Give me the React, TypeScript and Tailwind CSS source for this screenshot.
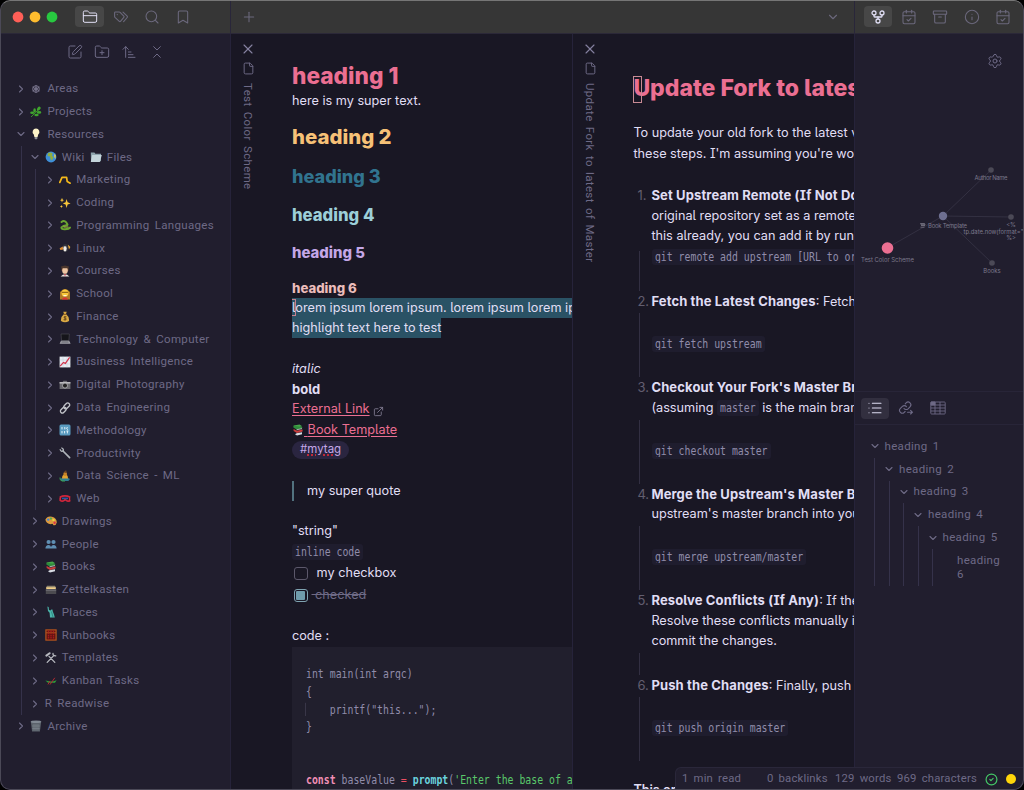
import React from "react";
import {
  Archive, Bookmark, CalendarCheck, ChevronDown, ChevronRight, ChevronsDownUp, CircleCheck, ExternalLink,
  File, FolderClosed, FolderPlus, GitFork, Info, List, Plus, Search, Settings, SquarePen, X, ArrowUpNarrowWide,
} from "lucide-react";

const glyphs: Record<string, React.ReactNode> = {
  areas: <g fill="none" stroke="#77738b" strokeWidth="1"><circle cx="6" cy="6" r="1.3" /><circle cx="6" cy="6" r="3.3" /><path d="M6 2v8M2.5 4l7 4M2.5 8l7-4" /></g>,
  herb: <g fill="#3fa52d"><path d="M1 11Q5 7 10 2" stroke="#3c8f2c" fill="none" /><ellipse cx="8.8" cy="2.6" rx="2.2" ry="1.5" transform="rotate(-50 8.8 2.6)" /><ellipse cx="4.6" cy="4.4" rx="1.3" ry="2.2" /><ellipse cx="9" cy="6.4" rx="2.3" ry="1.3" /><ellipse cx="2.2" cy="6.8" rx="2" ry="1.3" /><ellipse cx="6.5" cy="9" rx="2.2" ry="1.2" /></g>,
  bulb: <g><path d="M6 .6a3.4 3.4 0 0 1 2.2 6L7.6 9H4.4l-.6-2.4A3.4 3.4 0 0 1 6 .6" fill="#fdf3c8" /><path d="M4.6 9h2.8v1.8L6 11.6l-1.4-.8z" fill="#8e8e93" /></g>,
  globe: <g><circle cx="6" cy="6" r="5.4" fill="#3f8fd8" /><path d="M3 2Q6 .8 7.6 2.6L7 5 8.6 6 7 9.6 5.4 8 5 5.6 2.6 5z" fill="#8fae3f" /><path d="M9 3l2 1-.4 4L9 6z" fill="#c2c068" /></g>,
  folder: <g><path d="M.8 1.600h3.600l1 1.200h5.600v7.400H1z" fill="#8ea4ad" /><path d="M2.200 4h9.600L9.800 11H.8z" fill="#c3d4da" /></g>,
  chart: <path d="M.8 8.400Q1.600 6.600 3 3.400L7.600 3.400 8.200 7.600 11.200 9.200" fill="none" stroke="#f5b91b" strokeWidth="1.700" strokeLinejoin="round" strokeLinecap="round" />,
  sparkle: <g fill="#f8c63a"><path d="M7.6 2 8.6 5.2 11.6 6.4 8.6 7.6 7.6 11 6.6 7.6 3.8 6.4 6.6 5.2z" /><path d="M3 .8 3.6 2.6 5 3.2 3.6 3.8 3 5.4 2.4 3.8 1 3.2 2.4 2.6zM2.4 7.8 2.8 9l1.2.5-1.2.4-.4 1.3L2 9.900l-1.2-.4L2 9z" /></g>,
  snake: <g fill="none" stroke="#6aa531" strokeWidth="1.900" strokeLinecap="round"><path d="M2.500 3Q5 .8 7 3.200T8.400 6Q4 6.600 2.400 8.400 2 10.400 6 10.200T11 8.600" /><path d="M5 8h4" stroke="#b8c84a" strokeWidth="1" /></g>,
  bird: <g><ellipse cx="6.400" cy="6" rx="3" ry="4" fill="#30303a" /><ellipse cx="6" cy="6.600" rx="1.700" ry="2.800" fill="#f0ece6" /><path d="M3.800 4.600.6 6.200 1.400 8l3-.6z" fill="#d98b35" /><path d="M8.800 2.600 11.400 5 10 7.600z" fill="#e6a63a" /><circle cx="6" cy="4" r=".6" fill="#222" /></g>,
  student: <g><path d="M2.500 2h7v4h-7z" fill="#5a3a28" /><ellipse cx="6" cy="5.400" rx="2.800" ry="3.400" fill="#efc6a3" /><path d="M2 1.500 6 .4l4 1.100-1 1.700H3z" fill="#4b372e" /><path d="M1.600 11.600Q6 6.800 10.400 11.600z" fill="#e8e3df" /><path d="M5.200 9h1.600L6 11.600z" fill="#c63540" /></g>,
  school: <g><path d="M1 11.400V4Q6-2 11 4v7.400z" fill="#b07a28" /><circle cx="6" cy="5" r="3.500" fill="#fac93c" /><path d="M3 4.300h6" stroke="#7b5312" /><path d="M2.600 11.600Q6 7 9.400 11.600z" fill="#d33" /><path d="M4.400 7.200h3.200v1H4.400z" fill="#fff" /></g>,
  money: <g><path d="M4.300.7h3.400L7 3Q10.600 6 10 10 6 12.400 2 10 1.400 6 5 3z" fill="#d9a944" /><path d="M4.500 3.300h3" stroke="#7b4e1d" /><path d="M7.500 5.800H5.200q-.8 1 .8 1.300 2 .5 1 1.600H4.500M6 5v4.600" fill="none" stroke="#614018" strokeWidth=".8" /></g>,
  laptop: <g><path d="M2 1h8.400l-.6 6.600H2.600z" fill="#15151a" stroke="#4d4d54" strokeWidth=".6" /><path d="M2 7.800h8.200l1.400 3H.6z" fill="#a5a5ac" /><path d="M2.400 9h7.200" stroke="#5d5d64" /></g>,
  growth: <g><path d="M.6.6h10.800v10.800H.6z" fill="#e9edf3" /><path d="M4 .6v10.800M8 .6v10.800M.6 4h10.800M.6 8h10.800" stroke="#b9c4d2" strokeWidth=".4" /><path d="M1.200 10.200 4.400 6.400 6.400 7.400 10.600 1.400" fill="none" stroke="#d2344c" strokeWidth="1.200" /></g>,
  camera: <g><path d="M.6 3h3l.8-1.300h3.200L8.400 3h3v7H.6z" fill="#6b6b70" /><path d="M.6 3h10.800v1.600H.6z" fill="#b9b9bd" /><circle cx="6" cy="6.600" r="2.500" fill="#222" stroke="#c8c8cc" strokeWidth=".7" /></g>,
  link: <g fill="none" stroke="#c2c4c9" strokeWidth="1.300"><rect x="5.800" y=".6" width="3.800" height="6.600" rx="1.900" transform="rotate(45 7.700 3.900)" /><rect x="2.400" y="4.800" width="3.800" height="6.600" rx="1.900" transform="rotate(45 4.300 8.100)" /></g>,
  method: <g><rect x=".5" y=".5" width="11" height="11" rx="1.500" fill="#5a9bc0" /><path d="M3 3v2.400M3 7v2.400M5.800 3v2.400M5.600 7v2.400M8.600 3 7.400 4.400 9 5.600M7.400 7h2M8.400 7v2.400" stroke="#e1f1f8" strokeWidth="1" fill="none" /></g>,
  wrench: <g fill="none" stroke="#aeb3b9" strokeLinecap="round"><path d="M4 4 10.600 10.600" strokeWidth="1.700" /><path d="M1.200 2.600Q2 5 4.200 4 5 2 2.800 1" strokeWidth="1.300" /></g>,
  genie: <g><path d="M2.400 11Q-.4 8.600 3.400 8H9l2 1-1.600 2z" fill="#2f7f93" /><path d="M3 8.600Q3 4.600 6 4.600t3 4z" fill="#e2a331" /><circle cx="6.200" cy="4" r="1.900" fill="#c98427" /><path d="M5.200 2.600Q5.400-.2 7.600.8L7.400 3z" fill="#6b4424" /><path d="M1 7.500q-.6 2.500 2 3.500h3" stroke="#3da652" fill="none" /></g>,
  web: <g fill="none"><path d="M.8 4.200Q6 1.500 11.200 4.200M1.200 4.400v3q2 1.400 4 0 1-1.400 2 0 2 1.400 4 0" stroke="#d0253b" strokeWidth="1.700" /><path d="M3 5.400h6" stroke="#2c56a3" strokeWidth="1.600" /><path d="M10.600 4v4.500" stroke="#d0253b" strokeWidth="1.300" /></g>,
  palette: <g><path d="M.4 4.600Q2.400.6 7 1.800t4.800 5.600Q10.800 11 8.400 10.200 7.600 8.200 6 9.200.8 8.800.4 4.600" fill="#dc9a3f" /><circle cx="3.200" cy="4.600" r="1.200" fill="#3c83d8" /><circle cx="5.900" cy="3.600" r="1.100" fill="#48b053" /><circle cx="8.500" cy="4.900" r="1.200" fill="#e6d943" /><circle cx="9.600" cy="7.700" r="1.200" fill="#d9364a" /></g>,
  people: <g fill="#5f8fb3"><circle cx="3.600" cy="4" r="2.100" /><circle cx="8.500" cy="4" r="2.100" /><path d="M.4 10.600Q.6 7 3.600 7q2 0 2.400 2Q6.500 7 8.500 7q3 0 3.100 3.600z" /></g>,
  books: <g><path d="M1.400 1.600 7.600.4l2.600 1.800L4.600 4z" fill="#45a64a" /><path d="M1.400 1.800v1.600L4.600 5.600l5.600-1.400V3z" fill="#2f8c3c" /><path d="M1.600 5 5 6.800l5.600-1.200v2L5 9 1.600 7z" fill="#c93c3c" /><path d="M4.600 9.200 10 8.200v2l-5 1.400-2-1.400z" fill="#d8dce3" /><path d="M4.600 5.800 10 4.600" stroke="#eee" strokeWidth=".7" /></g>,
  box: <g><path d="M1 3.600 2 1.800h8l1 1.800z" fill="#8d836d" /><path d="M1.200 3.200h9.600v2H1.200z" fill="#f0cf8b" /><path d="M.8 5h10.400v5H.8z" fill="#4c4b50" /><path d="M.8 6.200h10.400" stroke="#87858b" strokeWidth=".7" /></g>,
  liberty: <g fill="#4bb5ab"><path d="M2.400.6 3.600 1 4 4l1.600.4.8-1 1 .2.4 2L9 8.400l.8 3.200H5L4.600 6.800 3 5z" /><path d="M6.400 5.500 8 11" stroke="#2a8079" strokeWidth=".8" /></g>,
  abacus: <g><rect x=".9" y=".9" width="10.200" height="10.200" fill="#5f1512" stroke="#b4541e" strokeWidth="1.200" /><path d="M1 3.800h10" stroke="#b4541e" /><path d="M3.500 1.500v9M6 1.500v9M8.500 1.500v9" stroke="#a51c1c" strokeWidth="1.400" strokeDasharray="1.500 .7" /></g>,
  tools: <g fill="none" stroke="#b8bac0" strokeWidth="1.300" strokeLinecap="round"><path d="M2.200 10.400 9 3.400M4 4.400 9.800 10.400" /><path d="M1.400 3.600 4.600 1.200" strokeWidth="2" /><path d="M8 1.400Q7.600 4 10.800 3.800" /></g>,
  sled: <g><path d="M.4 5.600Q6 7.400 11.600 5.200L10 7.800H3z" fill="#2e9e3a" /><path d="M5 9.600 9.800 2.800M3 9.400 5 6" stroke="#b4292e" strokeWidth="1" /></g>,
  trash: <g><path d="M.8 1.800h10.400l-1.300 9.800H2.100z" fill="#5c636c" /><ellipse cx="6" cy="1.800" rx="5.300" ry="1.300" fill="#818993" /><path d="M4 4v6.500M6 4v6.500M8 4v6.500M2 6h8M2.200 8.500h7.500" stroke="#858d96" strokeWidth=".5" /></g>,
};

function Glyph({ name }: { name: string }) {
  return <svg viewBox="0 0 12 12" className="inline-block size-3 shrink-0">{glyphs[name]}</svg>;
}

type Node = { label: string; icon?: string; kids?: Node[] };

const tree: Node[] = [
  { label: "Areas", icon: "areas" },
  { label: "Projects", icon: "herb" },
  {
    label: "Resources", icon: "bulb", kids: [
      {
        label: "Wiki|Files", icon: "globe", kids: [
          { label: "Marketing", icon: "chart" },
          { label: "Coding", icon: "sparkle" },
          { label: "Programming Languages", icon: "snake" },
          { label: "Linux", icon: "bird" },
          { label: "Courses", icon: "student" },
          { label: "School", icon: "school" },
          { label: "Finance", icon: "money" },
          { label: "Technology & Computer", icon: "laptop" },
          { label: "Business Intelligence", icon: "growth" },
          { label: "Digital Photography", icon: "camera" },
          { label: "Data Engineering", icon: "link" },
          { label: "Methodology", icon: "method" },
          { label: "Productivity", icon: "wrench" },
          { label: "Data Science - ML", icon: "genie" },
          { label: "Web", icon: "web" },
        ],
      },
      { label: "Drawings", icon: "palette" },
      { label: "People", icon: "people" },
      { label: "Books", icon: "books" },
      { label: "Zettelkasten", icon: "box" },
      { label: "Places", icon: "liberty" },
      { label: "Runbooks", icon: "abacus" },
      { label: "Templates", icon: "tools" },
      { label: "Kanban Tasks", icon: "sled" },
      { label: "R Readwise" },
    ],
  },
  { label: "Archive", icon: "trash" },
];

function TreeRow({ node }: { node: Node }) {
  const parts = node.label.split("|");
  return (
    <li>
      <div className="flex h-[22.77px] items-center pl-[7.4px]">
        {node.kids ? <ChevronDown className="size-3 shrink-0" strokeWidth={2.2} /> : <ChevronRight className="size-3 shrink-0" strokeWidth={2.2} />}
        <span className="ml-[3.4px] flex items-center gap-[5px]">
          {node.icon && <Glyph name={node.icon} />}
          <span>{parts[0]}</span>
          {parts[1] && <Glyph name="folder" />}
          {parts[1] && <span>{parts[1]}</span>}
        </span>
      </div>
      {node.kids && (
        <ul className="ml-[13.4px] border-l border-[#35324a]">
          {node.kids.map((k) => <TreeRow key={k.label} node={k} />)}
        </ul>
      )}
    </li>
  );
}

function Code({ children, bare }: { children: React.ReactNode; bare?: boolean }) {
  const text = <span className="inline-block origin-center scale-y-[1.2] whitespace-pre font-['DejaVu_Sans_Mono',monospace] text-[9.85px] leading-[14px] text-[#908caa]">{children}</span>;
  return bare ? text : <code className="inline-flex h-4 items-center rounded-[3px] bg-[#1f1d2e] px-[3px] align-middle">{text}</code>;
}

function Strong({ children }: { children: React.ReactNode }) {
  return <b className="text-[13px] font-bold tracking-[0.13px]">{children}</b>;
}

function Step({ n, lines, code, height = "tall" }: { n: number; lines: React.ReactNode[]; code?: string; height?: "tall" | "short" | "first" }) {
  const h = height === "tall" ? "h-[65.9px] items-center" : height === "first" ? "h-[44.7px] items-start pt-[3px]" : "h-[23.2px]";
  return (
    <li>
      <div className="flex">
        <span className="w-[18px] shrink-0 pl-1 text-[13px] text-[#625e6f]">{n}.</span>
        <div>{lines.map((l, i) => <p key={i} className="h-[20.33px]">{l}</p>)}</div>
      </div>
      <div className={"flex " + h}>
        <div className="ml-1.5 h-[calc(100%-2px)] w-px shrink-0 self-end bg-[#322f42]" />
        <div className="ml-[11.500px] flex">{code && <Code>{code}</Code>}</div>
      </div>
    </li>
  );
}

function TabSpine({ title }: { title: string }) {
  return (
    <div className="flex w-[34px] shrink-0 flex-col items-center pt-[7px] text-[#6e6a86]">
      <X className="size-4 text-[#8581a0]" strokeWidth={1.7} />
      <File className="mt-[5px] mb-2 size-[13px]" strokeWidth={1.8} />
      <span className="whitespace-nowrap font-['Roboto',sans-serif] text-[11.500px] leading-4 tracking-[0.35px] [word-spacing:2px] [writing-mode:vertical-rl]">{title}</span>
    </div>
  );
}

const body = "font-['Inter',sans-serif] [font-feature-settings:'cv05','cv08']";
const chrome = "font-['Roboto',sans-serif] text-[11.500px] tracking-[0.33px] [word-spacing:2px]";

function Outline({ level }: { level: number }) {
  return (
    <div>
      <div className="flex h-[22.8px] items-center pl-[8px]">
        <ChevronDown className="size-3 shrink-0" strokeWidth={2.2} />
        <span className="ml-1">heading {level}</span>
      </div>
      <div className="ml-[13.500px] border-l border-[#35324a]">
        {level < 5 ? <Outline level={level + 1} /> : <p className="w-[76px] pt-[4px] pb-[4px] pl-6 leading-[14.500px]">heading 6</p>}
      </div>
    </div>
  );
}

export default function App() {
  return (
    <div className={"h-[790px] w-[1024px] bg-black text-[#e0def4] " + body}>
      <div className="relative flex h-full flex-col overflow-hidden rounded-[10px] bg-[#191724]">
        <header className="flex h-[34px] shrink-0 border-b border-[#2b2838] bg-[#363636] text-[#6b687c]">
          <div className="flex w-[231px] shrink-0 items-center border-r border-[#29263a] pl-3">
            <div className="flex gap-[5px]">
              <i className="size-3 scale-90 rounded-full bg-[#ff5f57]" />
              <i className="size-3 scale-90 rounded-full bg-[#febc2e]" />
              <i className="size-3 scale-90 rounded-full bg-[#28c840]" />
            </div>
            <div className="ml-[17px] flex h-[21px] w-[29px] items-center justify-center rounded bg-[#474747] text-[#e0def4]"><FolderClosed className="size-4" strokeWidth={1.5} /></div>
            <svg viewBox="0 0 16 16" className="ml-[9px] size-4" fill="none" stroke="currentColor" strokeWidth="1.100" strokeLinejoin="round" strokeLinecap="round">
              <path d="M1.600 3.800q0-.8.8-.8h3.800q.5 0 .9.400L10.800 7.200q.6.600 0 1.200l-3.300 3.900q-.6.600-1.200 0L2 8.400Q1.600 8 1.600 7.500z" /><path d="M10 3.200 14.200 7.200q.6.600 0 1.300L10.600 12.600M4.200 5.600h.1" />
            </svg>
            <Search className="ml-[15px] size-4" strokeWidth={1.6} />
            <Bookmark className="ml-[15px] size-4" strokeWidth={1.6} />
          </div>
          <div className="flex flex-1 items-center justify-between border-r border-[#29263a] pr-3.5 pl-[10px]">
            <Plus className="size-4" strokeWidth={1.600} />
            <ChevronDown className="size-[14px]" strokeWidth={1.900} />
          </div>
          <div className="flex w-[169px] shrink-0 items-center pl-[9px]">
            <div className="flex h-[21px] w-[28px] items-center justify-center rounded bg-[#474747] text-[#e0def4]"><GitFork className="size-4" strokeWidth={1.900} /></div>
            <CalendarCheck className="ml-[9px] size-4" strokeWidth={1.600} />
            <Archive className="ml-[15px] size-4" strokeWidth={1.600} />
            <Info className="ml-[15.500px] size-4" strokeWidth={1.600} />
            <CalendarCheck className="ml-[15.500px] size-4" strokeWidth={1.600} />
          </div>
        </header>

        <div className="flex min-h-0 flex-1">
          <aside className="flex w-[231px] shrink-0 flex-col border-r border-[#26233a] bg-[#211e2e] text-[#6e6a86]">
            <div className="flex h-[43.500px] items-center gap-[11.200px] pb-[8px] pl-[67px]">
              <SquarePen className="size-4" strokeWidth={1.500} />
              <FolderPlus className="size-4" strokeWidth={1.500} />
              <ArrowUpNarrowWide className="size-4" strokeWidth={1.500} />
              <ChevronsDownUp className="size-4" strokeWidth={1.500} />
            </div>
            <ul className={"pl-[7.600px] whitespace-nowrap " + chrome}>
              {tree.map((n) => <TreeRow key={n.label} node={n} />)}
            </ul>
          </aside>

          <section className="flex w-[342px] shrink-0 overflow-hidden border-r border-[#26233a]">
            <TabSpine title="Test Color Scheme" />
            <article className="ml-[27px] min-w-0 flex-1 overflow-hidden pt-[26px] text-[12.700px] leading-[20.33px] whitespace-nowrap">
              <h1 className="h-[31px] text-[22.700px] leading-[31px] font-extrabold text-[#eb6f92]">heading 1</h1>
              <p>here is my super text.</p>
              <h2 className="mt-3 h-7 text-[20.400px] leading-7 font-extrabold text-[#f6c177]">heading 2</h2>
              <h3 className="mt-[12px] h-[26px] text-[18.100px] leading-[26px] font-extrabold text-[#31748f]">heading 3</h3>
              <h4 className="mt-[14px] h-6 text-[16.700px] leading-6 font-extrabold text-[#9ccfd8]">heading 4</h4>
              <h5 className="mt-[15px] h-[22px] text-[14.900px] leading-[22px] font-extrabold text-[#c4a7e7]">heading 5</h5>
              <h6 className="mt-[13.500px] h-5 text-[13.200px] font-extrabold text-[#ebbcba]">heading 6</h6>
              <div className="flex flex-col items-start">
                <span className="bg-[#2a5265]"><span className="outline outline-[#c5808f]">l</span>orem ipsum lorem ipsum. lorem ipsum lorem ipsum</span>
                <span className="bg-[#2a5265]">highlight text here to test</span>
              </div>
              <p className="mt-[20.33px] italic">italic</p>
              <p className="h-[20.33px] text-[13px] font-bold">bold</p>
              <p className="flex items-center text-[#eb6f92]"><span className="underline underline-offset-2">External Link</span><ExternalLink className="mt-1 ml-[3px] size-[11px] text-[#817d92]" strokeWidth={1.900} /></p>
              <p className="flex h-[20.33px] items-center text-[#eb6f92]"><span className="whitespace-pre underline underline-offset-2"><Glyph name="books" />{" "}Book Template</span></p>
              <p className="flex h-[20.33px] items-center"><span className="inline-block h-[18px] rounded-full bg-[#2a2540] px-2 text-[11.500px] leading-[17px] text-[#c4a7e7]">#<span className="underline decoration-[#c02a3a] decoration-dotted decoration-2">mytag</span></span></p>
              <blockquote className="mt-[20.33px] border-l-2 border-[#52727f] pl-[13px]">my super quote</blockquote>
              <p className="mt-[20.33px]">"string"</p>
              <p className="flex h-[20.33px] items-center"><Code>inline code</Code></p>
              <p className="mt-px flex items-center"><i className="mr-[9px] ml-0.5 size-[13.500px] rounded-[3px] border border-[#5c586b]" />my checkbox</p>
              <p className="mt-[2px] flex items-center text-[#6e6a86]"><i className="mr-[4px] ml-0.5 flex size-[13.500px] items-center justify-center rounded-[3px] border border-[#7fa3b1]"><b className="size-[9px] rounded-[1px] bg-[#6f9cab]" /></i><s className="whitespace-pre"> checked</s></p>
              <p className="mt-[20.33px]">code :</p>
              <pre className="mt-px flex h-[160px] flex-col items-start bg-[#211f2d] pt-[18px] pl-[14px] leading-[17.700px]">
                <Line>int main(int argc)</Line>
                <Line>{"{"}</Line>
                <Line><span className="-ml-px border-l border-[#393648]">    printf("this...");</span></Line>
                <Line>{"}"}</Line>
                <Line> </Line>
                <Line> </Line>
                <Line><b className="text-[#f28fb5]">const</b> baseValue <span className="text-[#eb4f62]">=</span> <b className="text-[#6bd3de]">prompt</b>(<span className="text-[#5ac76a]">'Enter the base of a triangle: '</span>);</Line>
              </pre>
            </article>
          </section>

          <section className="flex min-w-0 flex-1 overflow-hidden border-r border-[#26233a]">
            <TabSpine title="Update Fork to latest of Master" />
            <article className="ml-[26.400px] min-w-0 flex-1 overflow-hidden pt-[39px] text-[12.700px] leading-[20.33px] whitespace-nowrap">
              <h1 className="relative h-[30px] text-[23px] leading-[30px] font-extrabold text-[#eb6f92]">Update Fork to latest of Master<i className="absolute top-[3px] left-0 h-[27px] w-[9px] border border-[#c88a94]" /></h1>
              <p className="mt-[20.300px]">To update your old fork to the latest version</p>
              <p>these steps. I'm assuming you're working</p>
              <ol className="mt-[21.400px]">
                <Step n={1} height="first" code="git remote add upstream [URL to original]" lines={[<Strong>Set Upstream Remote (If Not Done)</Strong>, "original repository set as a remote", "this already, you can add it by running"]} />
                <Step n={2} code="git fetch upstream" lines={[<><Strong>Fetch the Latest Changes</Strong>: Fetch the</>]} />
                <Step n={3} code="git checkout master" lines={[<Strong>Checkout Your Fork's Master Branch</Strong>, <>(assuming <Code>master</Code> is the main branch)</>]} />
                <Step n={4} code="git merge upstream/master" lines={[<Strong>Merge the Upstream's Master Branch</Strong>, "upstream's master branch into your"]} />
                <Step n={5} height="short" lines={[<><Strong>Resolve Conflicts (If Any)</Strong>: If there</>, "Resolve these conflicts manually in", "commit the changes."]} />
                <Step n={6} code="git push origin master" lines={[<><Strong>Push the Changes</Strong>: Finally, push the</>]} />
              </ol>
              <p className="mt-[19px] font-semibold">This or</p>
            </article>
          </section>

          <aside className="flex w-[169px] shrink-0 flex-col bg-[#211e2e] text-[#6e6a86]">
            <div className="flex h-[357px] flex-col">
              <Settings className="mt-[19px] mr-[21px] size-4 self-end" strokeWidth={1.500} />
              <svg viewBox="855 100 169 200" className="mt-[31px] h-[200px] w-[169px] font-['Inter',sans-serif] text-[5.900px]">
                <path d="M887 248 943 216 991 170M943 216 1011 217M943 216 992 263" stroke="#393647" strokeWidth=".8" fill="none" />
                <circle cx="887.500" cy="248" r="5.800" fill="#eb6f92" />
                <circle cx="943" cy="216" r="4.200" fill="#6e6f91" />
                <g fill="#4b4956"><circle cx="991" cy="170" r="2.800" /><circle cx="1011" cy="217" r="2.800" /><circle cx="992" cy="263" r="2.800" /></g>
                <g fill="#7c798c" textAnchor="middle">
                  <text x="887.500" y="261.500">Test Color Scheme</text>
                  <text x="947.500" y="227.500" textLength="39">Book Template</text>
                  <text x="991" y="180" textLength="33">Author Name</text>
                  <text x="992" y="272.500">Books</text>
                  <text x="1011" y="227">&lt;%</text>
                  <text x="963.500" y="233.500" textAnchor="start">tp.date.now(format="YYYY")</text>
                  <text x="1011" y="240">%&gt;</text>
                </g>
                <path d="M920.500 223.500h4l.6 1.200h-4zM921 225.500h4M920.500 227.200h4" stroke="#8a8795" strokeWidth=".7" fill="none" />
              </svg>
            </div>
            <div className="flex h-[34px] items-center border-y border-[#282538] pl-[6px]">
              <div className="flex h-[21px] w-[28px] items-center justify-center rounded bg-[#322f3f] text-[#e0def4]"><List className="size-4" strokeWidth={1.600} /></div>
              <svg viewBox="0 0 16 16" className="ml-[9px] size-4" fill="none" stroke="currentColor" strokeWidth="1.100" strokeLinecap="round">
                <path d="M6 8.500a2.700 2.700 0 0 0 4 .3l2-2a2.750 2.750 0 0 0-3.900-3.900L7.200 3.800" />
                <path d="M8.400 6.700a2.700 2.700 0 0 0-4-.3l-2 2a2.750 2.750 0 0 0 3.900 3.900l.8-.8M9.600 12.200h4.700M12.600 10.400l1.800 1.800L12.600 14" />
              </svg>
              <svg viewBox="0 0 16 16" className="ml-[16px] size-4" fill="none" stroke="currentColor" strokeWidth=".9">
                <rect x=".8" y="2" width="14.400" height="12" rx=".8" /><path d="M.8 5h14.400M.8 8h14.400M.8 11h14.400M5 2v12M10 2v12" /><path d="M1 2h4v3H1z" fill="currentColor" />
              </svg>
            </div>
            <div className={"pt-[10px] pl-[5.500px] " + chrome}><Outline level={1} /></div>
          </aside>
        </div>

        <footer className="absolute right-0 bottom-0 flex h-[23px] w-[349px] items-center rounded-tl-md border-t border-l border-[#2a273a] bg-[#211e2e] pl-1.5 font-['Roboto',sans-serif] text-[11.300px] tracking-[0.2px] whitespace-nowrap text-[#6e6a86] [word-spacing:2px]">
          <span className="w-[85px]">1 min read</span>
          <span className="w-[68px]">0 backlinks</span>
          <span className="w-[62px]">129 words</span>
          <span className="w-[88px]">969 characters</span>
          <CircleCheck className="size-[13px] text-[#44c767]" strokeWidth={2.200} />
          <i className="ml-2 size-2.5 rounded-full bg-[#ffd60a]" />
        </footer>
        <div className="pointer-events-none absolute inset-0 rounded-[10px] border border-[#4b4957] border-t-[#767676]" />
      </div>
    </div>
  );
}

function Line({ children }: { children: React.ReactNode }) {
  return <span className="flex h-[17.700px] items-center"><Code bare>{children}</Code></span>;
}
